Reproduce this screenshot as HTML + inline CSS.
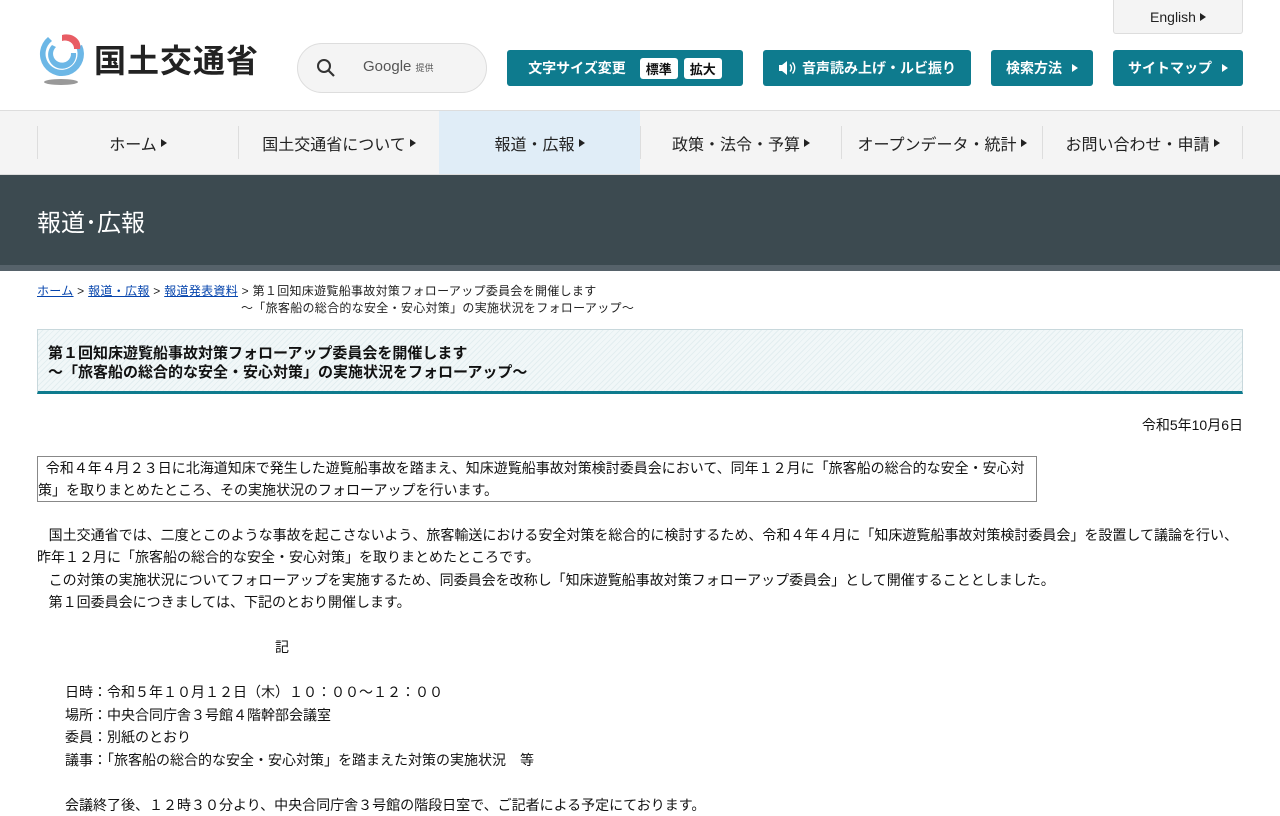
<!DOCTYPE html>
<html><head><meta charset="utf-8"><style>
*{margin:0;padding:0;box-sizing:border-box}
body{width:1280px;height:800px;overflow:hidden;background:#fff;font-family:"Liberation Sans","Noto Sans CJK JP",sans-serif;color:#222}
.hdr{position:relative;height:111px;border-bottom:1px solid #ddd}
.btn{position:absolute;top:50px;height:36px;background:#0e7b8e;color:#fff;font-size:14px;font-weight:bold;border-radius:3px;display:flex;align-items:center;justify-content:center;gap:6px}
.w{background:#fff;color:#111;border-radius:3px;padding:1px 6px;font-size:13px}
.tri{display:inline-block;width:0;height:0;border-left:6px solid currentColor;border-top:4px solid transparent;border-bottom:4px solid transparent;margin-left:4px}
.nav{height:64px;background:#f4f4f4;border-bottom:1px solid #ddd;display:flex;padding-left:37px}
.nav div{width:201px;display:flex;align-items:center;justify-content:center;font-size:16px;color:#222;border-left:1px solid #ddd;margin:15px 0;}
.nav div.on{background:#e0edf7;margin:0;border-left:none}
.ban{background:#3c4a50;color:#fff;font-size:24px;padding:28px 0 0 37px;border-bottom:6px solid #56626a;height:96px}
.bc{font-size:12px;padding:12px 37px 0;line-height:17px;letter-spacing:0.3px}
.bc a{color:#0645ad;text-decoration:underline}
.ttl{margin:12px 37px 0;height:65px;border:1px solid #c8d8dc;border-bottom:3px solid #0e7b8e;background:repeating-linear-gradient(135deg,#f1f7f8 0 3px,#e3eef0 3px 4px);padding:14px 10px;font-weight:bold;font-size:15px;line-height:19px;color:#111}
p{font-size:14px;line-height:22.5px;color:#111}
</style></head><body>
<div class="hdr">
<svg style="position:absolute;left:36px;top:33px" width="50" height="54" viewBox="0 0 50 54"><path d="M12 4 A22 22 0 1 0 46 12 L40 14 A16 16 0 1 1 16 8Z" fill="#6cb7e6"/><path d="M16 12 A14 14 0 1 0 40 20 L35 20 A9 9 0 1 1 20 14Z" fill="#6cb7e6"/><path d="M26 2 A14 12 0 0 1 44 16 L38 16 A9 8 0 0 0 26 8Z" fill="#e85d64"/><ellipse cx="25" cy="49" rx="17" ry="3" fill="#999"/></svg>
<div style="position:absolute;left:94px;top:36px;font-size:32px;font-weight:bold;color:#222;letter-spacing:1px">国土交通省</div>
<div style="position:absolute;left:297px;top:43px;width:190px;height:50px;border:1px solid #ddd;border-radius:25px;background:#f4f4f4">
<svg style="position:absolute;left:18px;top:14px" width="20" height="20" viewBox="0 0 20 20"><circle cx="8" cy="8" r="6" stroke="#333" stroke-width="2" fill="none"/><path d="M12.5 12.5 L18 18" stroke="#333" stroke-width="2.2"/></svg>
<span style="position:absolute;left:65px;top:14px;font-size:15px;color:#555">Google <span style="font-size:9px">提供</span></span></div>
<div style="position:absolute;left:1113px;top:0;width:130px;height:34px;background:#f4f4f4;border:1px solid #ddd;border-top:none;border-radius:0 0 3px 3px;font-size:14px;display:flex;align-items:center;justify-content:center">English<span class="tri"></span></div>
<div class="btn" style="left:507px;width:236px">文字サイズ変更 <span class="w" style="margin-left:8px">標準</span><span class="w">拡大</span></div>
<div class="btn" style="left:763px;width:208px"><svg width="18" height="16" viewBox="0 0 18 16"><path d="M1 5h3l5-4v14l-5-4H1z" fill="#fff"/><path d="M12 4.5a5 5 0 0 1 0 7M14.5 2.5a8 8 0 0 1 0 11" stroke="#fff" stroke-width="1.4" fill="none"/></svg>音声読み上げ・ルビ振り</div>
<div class="btn" style="left:991px;width:102px">検索方法<span class="tri"></span></div>
<div class="btn" style="left:1113px;width:130px">サイトマップ<span class="tri"></span></div>
</div>
<div class="nav"><div>ホーム<span class="tri"></span></div><div>国土交通省について<span class="tri"></span></div><div class="on">報道・広報<span class="tri"></span></div><div>政策・法令・予算<span class="tri"></span></div><div>オープンデータ・統計<span class="tri"></span></div><div style="border-right:1px solid #ddd">お問い合わせ・申請<span class="tri"></span></div></div>
<div class="ban">報道･広報</div>
<div class="bc"><a>ホーム</a> &gt; <a>報道・広報</a> &gt; <a>報道発表資料</a> &gt; 第１回知床遊覧船事故対策フォローアップ委員会を開催します<br><span style="padding-left:204px">～「旅客船の総合的な安全・安心対策」の実施状況をフォローアップ～</span></div>
<div class="ttl">第１回知床遊覧船事故対策フォローアップ委員会を開催します<br>～「旅客船の総合的な安全・安心対策」の実施状況をフォローアップ～</div>
<p style="text-align:right;margin:20px 37px 0">令和5年10月6日</p>
<p style="margin:19px 0 0 37px;width:1000px;border:1px solid #888;line-height:22px">&nbsp;&nbsp;令和４年４月２３日に北海道知床で発生した遊覧船事故を踏まえ、知床遊覧船事故対策検討委員会において、同年１２月に「旅客船の総合的な安全・安心対策」を取りまとめたところ、その実施状況のフォローアップを行います。</p>
<p style="margin:22px 37px 0">&nbsp;&nbsp;&nbsp;国土交通省では、二度とこのような事故を起こさないよう、旅客輸送における安全対策を総合的に検討するため、令和４年４月に「知床遊覧船事故対策検討委員会」を設置して議論を行い、昨年１２月に「旅客船の総合的な安全・安心対策」を取りまとめたところです。<br>&nbsp;&nbsp;&nbsp;この対策の実施状況についてフォローアップを実施するため、同委員会を改称し「知床遊覧船事故対策フォローアップ委員会」として開催することとしました。<br>&nbsp;&nbsp;&nbsp;第１回委員会につきましては、下記のとおり開催します。<br><br><span style="padding-left:238px">記</span><br><br>
<span style="padding-left:28px">日時：令和５年１０月１２日（木）１０：００～１２：００</span><br>
<span style="padding-left:28px">場所：中央合同庁舎３号館４階幹部会議室</span><br>
<span style="padding-left:28px">委員：別紙のとおり</span><br>
<span style="padding-left:28px">議事：「旅客船の総合的な安全・安心対策」を踏まえた対策の実施状況　等</span><br><br>
<span style="padding-left:28px">会議終了後、１２時３０分より、中央合同庁舎３号館の階段日室で、ご記者による予定にております。</span></p>
</body></html>
